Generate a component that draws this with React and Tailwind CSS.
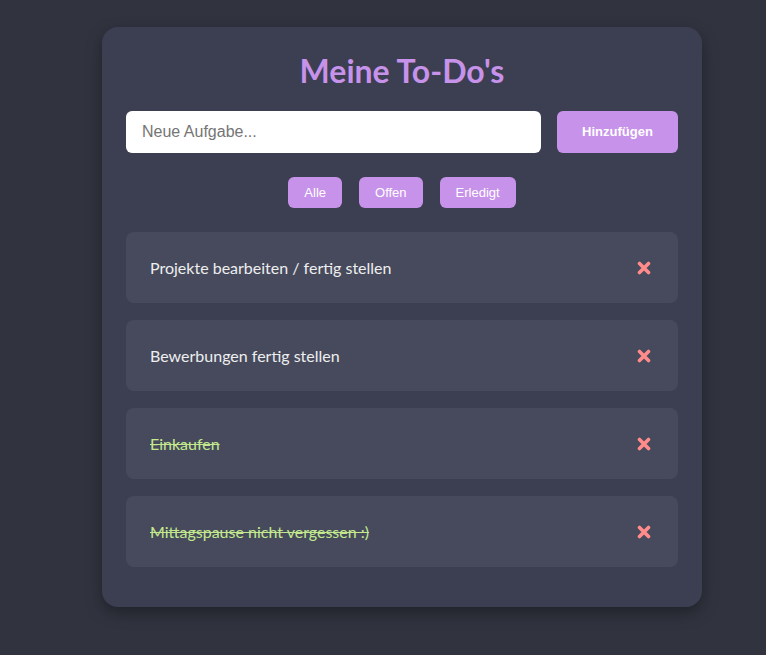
import { useState } from "react";

const startTodos = [
  { id: 1, text: "Projekte bearbeiten / fertig stellen", done: false },
  { id: 2, text: "Bewerbungen fertig stellen", done: false },
  { id: 3, text: "Einkaufen", done: true },
  { id: 4, text: "Mittagspause nicht vergessen :)", done: true },
];

export default function App() {
  const [todos, setTodos] = useState(startTodos);
  const [filter, setFilter] = useState("alle");
  const [text, setText] = useState("");

  const add = () => {
    if (!text.trim()) return;
    setTodos([...todos, { id: Date.now(), text: text.trim(), done: false }]);
    setText("");
  };

  const visible = todos.filter((t) =>
    filter === "offen" ? !t.done : filter === "erledigt" ? t.done : true
  );

  return (
    <div className="flex min-h-screen items-start justify-center bg-[#31343f] pt-[27px] pb-10 pl-[38px]">
      <div className="w-[600px] rounded-2xl bg-[#3c3f51] px-6 pt-6 pb-6 shadow-[0_6px_16px_rgba(0,0,0,0.35)]">
        <h1 className="mb-5 text-center font-['Lato',sans-serif] text-[32px] font-bold leading-[40px] text-[#c792ea]">
          Meine To-Do's
        </h1>

        {/* eingabe */}
        <div className="flex gap-4">
          <input
            value={text}
            onChange={(e) => setText(e.target.value)}
            onKeyDown={(e) => e.key === "Enter" && add()}
            placeholder="Neue Aufgabe..."
            className="h-[42px] flex-1 rounded-md bg-white px-4 font-['Liberation_Sans',Arial,sans-serif] text-base text-[#222] outline-none placeholder:text-[#757575]"
          />
          <button
            onClick={add}
            className="h-[42px] w-[121px] rounded-md bg-[#c792ea] font-['Liberation_Sans',Arial,sans-serif] text-[13px] font-bold text-white"
          >
            Hinzufügen
          </button>
        </div>

        {/* filter */}
        <div className="mt-6 mb-6 flex justify-center gap-[17px]">
          {[
            ["alle", "Alle"],
            ["offen", "Offen"],
            ["erledigt", "Erledigt"],
          ].map(([key, label]) => (
            <button
              key={key}
              onClick={() => setFilter(key)}
              className="h-[31px] rounded-md bg-[#c792ea] px-4 font-['Liberation_Sans',Arial,sans-serif] text-[13px] text-white"
            >
              {label}
            </button>
          ))}
        </div>

        <ul>
          {visible.map((t) => (
            <li
              key={t.id}
              className="mb-[17px] flex h-[71px] items-center justify-between rounded-lg bg-[#464a5c] pl-6 pr-[26px] last:mb-[16px]"
            >
              <span
                onClick={() =>
                  setTodos(todos.map((x) => (x.id === t.id ? { ...x, done: !x.done } : x)))
                }
                className={`cursor-pointer font-['Lato',sans-serif] text-base ${
                  t.done ? "text-[#c3e88d] line-through" : "text-[#eeeeee]"
                }`}
              >
                {t.text}
              </span>
              <button
                onClick={() => setTodos(todos.filter((x) => x.id !== t.id))}
                className="flex h-4 w-4 items-center justify-center"
              >
                <svg width="14" height="14" viewBox="0 0 14 14">
                  <path
                    d="M2.5 2.5 L11.5 11.5 M11.5 2.5 L2.5 11.5"
                    stroke="#ff8b8b"
                    strokeWidth="3.6"
                    strokeLinecap="round"
                  />
                </svg>
              </button>
            </li>
          ))}
        </ul>
      </div>
    </div>
  );
}
